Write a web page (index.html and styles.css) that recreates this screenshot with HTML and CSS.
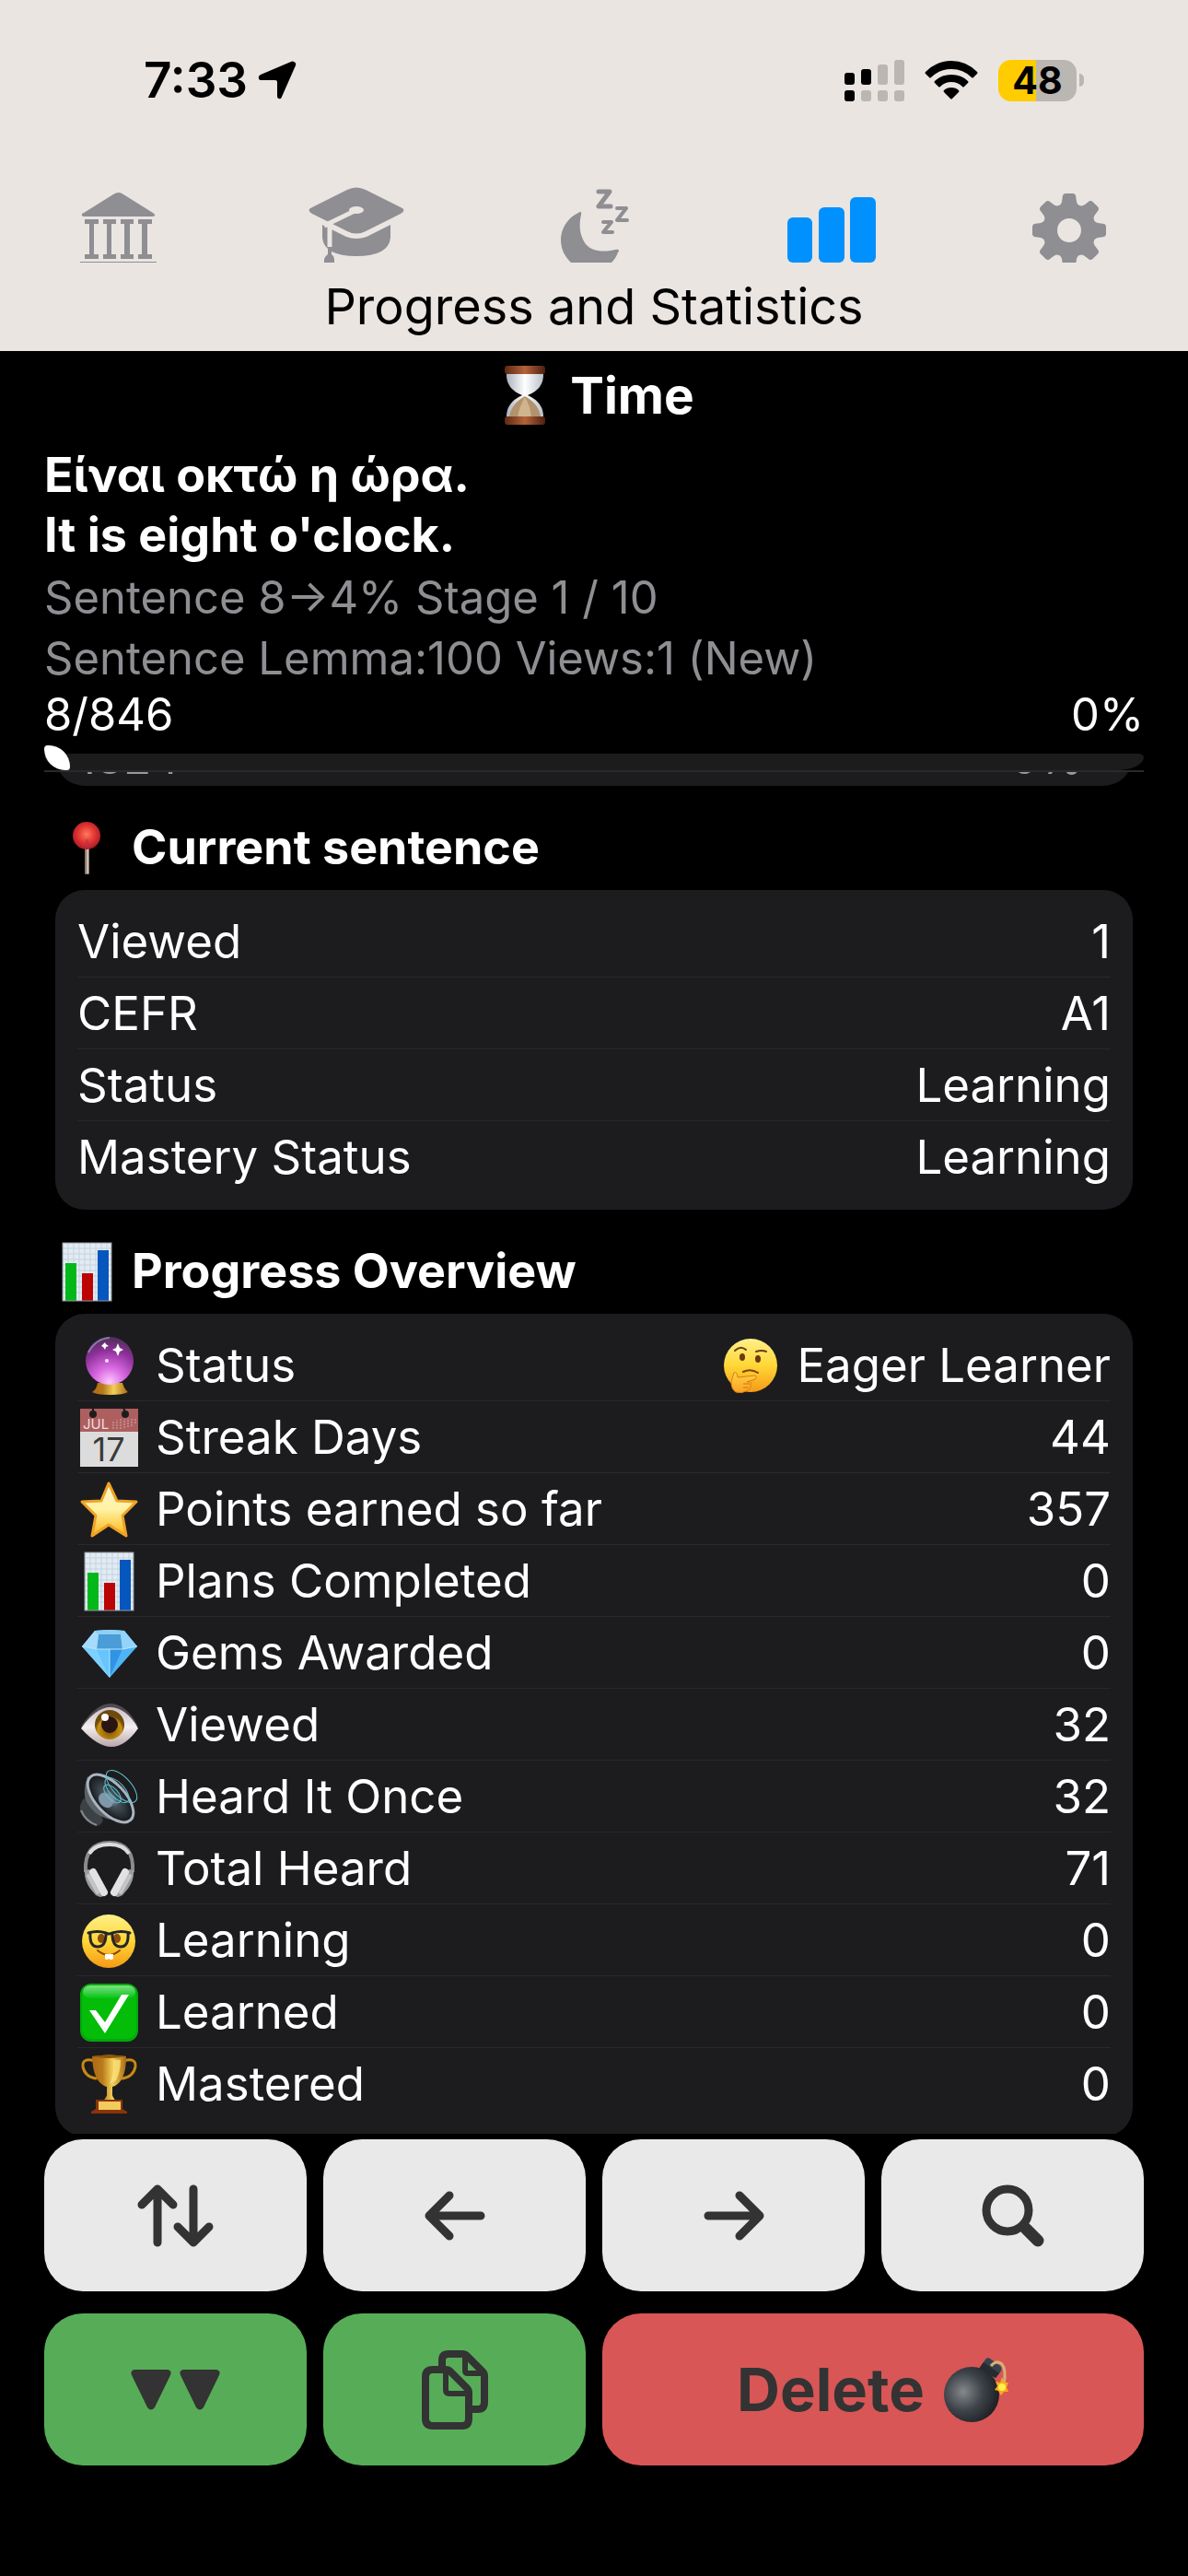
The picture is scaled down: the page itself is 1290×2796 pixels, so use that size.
FILE: index.html
```html
<!DOCTYPE html>
<html lang="en">

<head>
    <meta charset="UTF-8">
    <meta name="viewport" content="width=device-width, initial-scale=1.0">
    <title>Progress and Statistics</title>
    <link rel="stylesheet" href="styles.css">
</head>

<body>
    <header class="top">
        <div class="status-bar">
            <div class="status-left">
                <span class="clock">7:33</span>
                <svg class="location" viewBox="0 0 42 42" width="42" height="42">
                    <path d="M39 1Q42 2 41 5L26 39Q25 42 23 41Q21 41 21 38V23Q21 21 19 21H4Q1 21 1 19Q0 17 3 15L36 1Q38 0 39 1Z" fill="#000" />
                </svg>
            </div>
            <div class="status-right">
                <svg viewBox="0 0 65 45" width="65" height="45">
                    <g fill="#bab6b1">
                        <rect x="36" y="5" width="11" height="22" rx="3" />
                        <rect x="54" y="0" width="11" height="27" rx="3" />
                        <rect x="18" y="33" width="11" height="12" rx="3" />
                        <rect x="36" y="33" width="11" height="12" rx="3" />
                        <rect x="54" y="33" width="11" height="12" rx="3" />
                    </g>
                    <rect x="0" y="14" width="11" height="13" rx="3" />
                    <rect x="18" y="10" width="11" height="17" rx="3" />
                    <rect x="0" y="33" width="11" height="12" rx="3" />
                </svg>
                <svg viewBox="0 0 58 42" width="58" height="42">
                    <path d="M1 12Q13 0 29 0Q45 0 57 12Q58 13 57 14L53 18Q52 19 51 18Q42 9 29 9Q16 9 7 18Q6 19 5 18L1 14Q0 13 1 12Z" />
                    <path d="M11 22Q18 15 29 15Q40 15 47 22Q48 23 47 24L43 28Q42 29 41 28Q36 23 29 23Q22 23 17 28Q16 29 15 28L11 24Q10 23 11 22Z" />
                    <path d="M21 32Q24 29 29 29Q34 29 37 32Q38 33 37 34L30 41Q29 42 28 41L21 34Q20 33 21 32Z" />
                </svg>
                <span class="battery"><span class="battery-level">48</span></span>
            </div>
        </div>

        <nav class="tabs">
            <a href="#home" aria-label="Home">
                <svg viewBox="0 0 110 85" width="110" height="85">
                    <path d="M49 11Q55 7 60 11L92 31Q95 33 94 34Q94 35 91 35H18Q15 35 15 34Q14 32 17 31Z" />
                    <path d="M18 38H33V43H28V76H33V81H18V76H23V43H18Z" />
                    <path d="M38 38H52V43H47V76H52V81H38V76H42V43H38Z" />
                    <path d="M57 38H71V43H67V76H71V81H57V76H61V43H57Z" />
                    <path d="M76 38H91V43H86V76H91V81H76V76H80V43H76Z" />
                    <rect x="13" y="84" width="83" height="1" />
                </svg>
            </a>
            <a href="#learn" aria-label="Learn">
                <svg viewBox="0 0 110 85" width="110" height="85">
                    <path d="M45 6Q55 1 65 6L103 25Q110 28 103 32L65 51Q55 56 45 51L7 32Q0 28 7 25Z" />
                    <path d="M18 44L44 57Q55 61 66 57L92 44V58Q90 78 55 78Q20 78 18 58Z" />
                    <path class="cut" d="M55 28L20 45" />
                    <ellipse class="hole" cx="55" cy="28" rx="8" ry="4" />
                    <path class="cut" d="M26 44V68" />
                    <path d="M24 68L28 71V76Q31 78 31 81V85H20V81Q21 78 24 76Z" />
                </svg>
            </a>
            <a href="#sleep" aria-label="Sleep">
                <svg viewBox="0 0 110 85" width="110" height="85">
                    <path d="M38 31Q42 28 41 33C38 45 40 57 46 65C53 73 64 74 78 71Q84 70 81 74C79 79 77 82 74 85H30C22 77 19 69 19 60C19 48 27 36 38 31Z" />
                    <g class="zigzag">
                        <path stroke-width="5" d="M60 8H72L60 24H73" />
                        <path stroke-width="4" d="M80 26H90L80 39H91" />
                        <path stroke-width="4" d="M65 41H74L65 52H75" />
                    </g>
                </svg>
            </a>
            <a href="#progress" aria-label="Progress" class="active">
                <svg viewBox="0 0 110 85" width="110" height="85">
                    <rect x="7" y="36" width="27" height="49" rx="6" />
                    <rect x="41" y="25" width="28" height="60" rx="6" />
                    <rect x="75" y="14" width="28" height="71" rx="6" />
                </svg>
            </a>
            <a href="#settings" aria-label="Settings">
                <svg viewBox="0 0 110 85" width="110" height="85">
                    <g transform="translate(55 50)">
                        <circle r="29" />
                        <path id="tooth" d="M-13 -26Q-9 -27 -8 -31L-7 -38Q-6 -40 -4 -40H4Q6 -40 7 -38L8 -31Q9 -27 13 -26Z" />
                        <use href="#tooth" transform="rotate(45)" />
                        <use href="#tooth" transform="rotate(90)" />
                        <use href="#tooth" transform="rotate(135)" />
                        <use href="#tooth" transform="rotate(180)" />
                        <use href="#tooth" transform="rotate(225)" />
                        <use href="#tooth" transform="rotate(270)" />
                        <use href="#tooth" transform="rotate(315)" />
                        <circle class="hole" r="13" />
                    </g>
                </svg>
            </a>
        </nav>
        <p class="page-title">Progress and Statistics</p>
    </header>

    <section class="sentence">
        <h1>
            <svg class="emoji" viewBox="0 0 68 68">
                <defs>
                    <linearGradient id="wood">
                        <stop offset="0" stop-color="#5b2a14" />
                        <stop offset=".5" stop-color="#b5623a" />
                        <stop offset="1" stop-color="#4b2010" />
                    </linearGradient>
                    <linearGradient id="glass">
                        <stop offset="0" stop-color="#aab2bd" />
                        <stop offset=".5" stop-color="#fff" />
                        <stop offset="1" stop-color="#b9c0c9" />
                    </linearGradient>
                </defs>
                <path d="M14 10H54Q55 27 37 34Q55 42 54 59H14Q13 42 31 34Q13 27 14 10Z" fill="url(#glass)" />
                <path d="M34 35Q50 44 51 58H17Q18 44 34 35Z" fill="#b2936f" />
                <path d="M34 36Q40 46 41 58H26Q28 46 34 36Z" fill="#d0b48e" />
                <rect x="12" y="2" width="44" height="9" rx="3" fill="url(#wood)" />
                <rect x="12" y="57" width="44" height="9" rx="3" fill="url(#wood)" />
            </svg>
            Time
        </h1>
        <div class="phrase">
            <p lang="el">Είναι οκτώ η ώρα.</p>
            <p>It is eight o'clock.</p>
        </div>
        <div class="details">
            <p>Sentence 8→4% Stage 1 / 10</p>
            <p>Sentence Lemma:100 Views:1 (New)</p>
        </div>
        <div class="counter">
            <label for="position">8/846</label>
            <span>0%</span>
        </div>
        <input class="slider" id="position" type="range" min="0" max="846" value="0">
    </section>

    <main class="stats">
        <div class="scrolled">
            <div class="scrolled-card">
                <span>1824</span>
                <span>0%</span>
            </div>
        </div>

        <h2>
            <svg class="emoji" viewBox="0 0 68 68">
                <defs>
                    <radialGradient id="pin" cx=".5" cy=".45">
                        <stop offset="0" stop-color="#ff7a5e" />
                        <stop offset=".55" stop-color="#e63b35" />
                        <stop offset="1" stop-color="#b81f2a" />
                    </radialGradient>
                </defs>
                <rect x="32" y="33" width="5" height="30" rx="1" fill="#8b7a6e" />
                <rect x="34" y="33" width="2" height="29" fill="#c9bbb0" />
                <circle cx="34" cy="21" r="15" fill="url(#pin)" />
                <path d="M32 34L33 25H36L37 34Z" fill="#b9304a" opacity=".6" />
            </svg>
            Current sentence
        </h2>
        <div class="card">
            <table>
                <tr>
                    <th scope="row">Viewed</th>
                    <td>1</td>
                </tr>
                <tr>
                    <th scope="row">CEFR</th>
                    <td>A1</td>
                </tr>
                <tr>
                    <th scope="row">Status</th>
                    <td>Learning</td>
                </tr>
                <tr>
                    <th scope="row">Mastery Status</th>
                    <td>Learning</td>
                </tr>
            </table>
        </div>

        <h2>
            <svg class="emoji" viewBox="0 0 68 68">
                <rect x="8" y="3" width="53" height="63" fill="#e3ebf2" />
                <path d="M8 9H61M8 15H61M8 21H61M8 27H61M8 33H61M8 39H61M8 45H61M8 51H61M8 57H61M14 3V66M20 3V66M26 3V66M32 3V66M38 3V66M44 3V66M50 3V66M56 3V66" stroke="#c3d3e2" />
                <rect x="11" y="25" width="12" height="41" fill="#05b81a" />
                <rect x="29" y="36" width="12" height="30" fill="#bb0404" />
                <rect x="46" y="11" width="12" height="55" fill="#0657bd" />
                <rect x="8" y="3" width="53" height="63" fill="none" stroke="#8f979f" />
            </svg>
            Progress Overview
        </h2>
        <div class="card">
            <table>
                <tr>
                    <th scope="row">
                        <div class="cell">
                            <svg class="emoji" viewBox="0 0 68 68">
                                <defs>
                                    <radialGradient id="orb" cx=".5" cy=".95" r=".9">
                                        <stop offset="0" stop-color="#ffc8ff" />
                                        <stop offset=".35" stop-color="#d968e2" />
                                        <stop offset=".75" stop-color="#8c3098" />
                                        <stop offset="1" stop-color="#57305f" />
                                    </radialGradient>
                                    <linearGradient id="gold">
                                        <stop offset="0" stop-color="#b06a12" />
                                        <stop offset=".3" stop-color="#b87a1b" />
                                        <stop offset=".6" stop-color="#f3cf5a" />
                                        <stop offset="1" stop-color="#a8690f" />
                                    </linearGradient>
                                </defs>
                                <path d="M22 53H49Q51 60 55 63Q50 66 35 66Q21 66 16 63Q21 60 22 53Z" fill="url(#gold)" />
                                <circle cx="35" cy="29" r="26" fill="url(#orb)" />
                                <path d="M12 20Q20 5 35 4" fill="none" stroke="#a9a4d8" stroke-width="2" opacity=".6" />
                                <path d="M44 10L46 15L50 17L46 19L44 24L42 19L38 17L42 15Z" fill="#fff" />
                                <path d="M30 9L31 11L34 13L31 14L30 17L28 14L26 13L28 11Z" fill="#fff" />
                                <circle cx="32" cy="29" r="2" fill="#fbe0ff" />
                            </svg>
                            Status
                        </div>
                    </th>
                    <td>
                        <div class="cell cell-end">
                            <svg class="emoji" viewBox="0 0 68 68">
                                <defs>
                                    <linearGradient id="face" x2="0" y2="1">
                                        <stop offset="0" stop-color="#fff08a" />
                                        <stop offset=".5" stop-color="#ffd736" />
                                        <stop offset="1" stop-color="#f59a16" />
                                    </linearGradient>
                                    <linearGradient id="hand" x2="0" y2="1">
                                        <stop offset="0" stop-color="#ffd447" />
                                        <stop offset="1" stop-color="#fba022" />
                                    </linearGradient>
                                </defs>
                                <circle cx="35" cy="34" r="29" fill="url(#face)" />
                                <path d="M18 18Q24 12 30 17M41 19Q47 17 52 19" fill="none" stroke="#6b3f10" stroke-width="2" stroke-linecap="round" />
                                <ellipse cx="26" cy="25" rx="3" ry="4" fill="#6b3a10" />
                                <ellipse cx="43" cy="27" rx="3" ry="4" fill="#6b3a10" />
                                <path d="M27 41Q35 37 43 42" fill="none" stroke="#7a4510" stroke-width="2" stroke-linecap="round" />
                                <path d="M17 42Q20 40 21 47L40 45Q43 46 40 49L31 52Q37 51 35 55Q36 59 32 61Q26 65 19 63Q14 60 14 52Z" fill="url(#hand)" stroke="#d9800f" />
                                <path d="M27 54H34M27 58H33" stroke="#c8740c" />
                            </svg>
                            Eager Learner
                        </div>
                    </td>
                </tr>
                <tr>
                    <th scope="row">
                        <div class="cell">
                            <svg class="emoji" viewBox="0 0 68 68">
                                <rect x="3" y="3" width="63" height="63" fill="#dcdcdc" />
                                <rect x="3" y="3" width="63" height="25" fill="#ad5f5f" />
                                <path d="M17 2V9M50 2L53 9" stroke="#1c1c1e" stroke-width="2" />
                                <circle cx="17" cy="9" r="4" fill="#1c1c1e" />
                                <circle cx="52" cy="9" r="4" fill="#1c1c1e" />
                                <path d="M39 25V16M43 25V15M47 25V14M51 24V14M55 23V13M59 22V13M63 19V13" stroke="#d8a9a9" stroke-dasharray="2 1" />
                                <text class="cal-month" x="6" y="25">JUL</text>
                                <text class="cal-day" x="34" y="60" text-anchor="middle">17</text>
                            </svg>
                            Streak Days
                        </div>
                    </th>
                    <td>44</td>
                </tr>
                <tr>
                    <th scope="row">
                        <div class="cell">
                            <svg class="emoji" viewBox="0 0 68 68">
                                <defs>
                                    <linearGradient id="star" x2="0" y2="1">
                                        <stop offset="0" stop-color="#fff6cf" />
                                        <stop offset=".5" stop-color="#fff2a2" />
                                        <stop offset="1" stop-color="#fbb718" />
                                    </linearGradient>
                                </defs>
                                <path d="M34 6L43 25L64 26L49 41L53 63L34 51L16 63L20 41L5 26L26 25Z" fill="url(#star)" stroke="#efa326" stroke-width="3" stroke-linejoin="round" />
                            </svg>
                            Points earned so far
                        </div>
                    </th>
                    <td>357</td>
                </tr>
                <tr>
                    <th scope="row">
                        <div class="cell">
                            <svg class="emoji" viewBox="0 0 68 68">
                                <rect x="8" y="3" width="53" height="63" fill="#e3ebf2" />
                                <path d="M8 9H61M8 15H61M8 21H61M8 27H61M8 33H61M8 39H61M8 45H61M8 51H61M8 57H61M14 3V66M20 3V66M26 3V66M32 3V66M38 3V66M44 3V66M50 3V66M56 3V66" stroke="#c3d3e2" />
                                <rect x="11" y="25" width="12" height="41" fill="#05b81a" />
                                <rect x="29" y="36" width="12" height="30" fill="#bb0404" />
                                <rect x="46" y="11" width="12" height="55" fill="#0657bd" />
                                <rect x="8" y="3" width="53" height="63" fill="none" stroke="#8f979f" />
                            </svg>
                            Plans Completed
                        </div>
                    </th>
                    <td>0</td>
                </tr>
                <tr>
                    <th scope="row">
                        <div class="cell">
                            <svg class="emoji" viewBox="0 0 68 68">
                                <path d="M19 10L35 9L51 10L65 27L35 61L5 27Z" fill="#4fb4f5" />
                                <path d="M19 10L35 9L51 10L59 26L48 30H22L10 26Z" fill="#7fcbf8" />
                                <path d="M23 14H47L49 30H21Z" fill="#4a9dd6" />
                                <path d="M19 10L23 14L21 30L5 27Z" fill="#a5dcfb" />
                                <path d="M51 10L47 14L49 30L65 27Z" fill="#93d4fa" />
                                <path d="M19 10L35 9L51 10L47 14H23Z" fill="#8fd0f5" />
                                <path d="M21 30H49L35 61Z" fill="#66c5fb" />
                                <path d="M35 30H49L35 61Z" fill="#2f93e6" />
                                <path d="M5 27L21 30L35 61Z" fill="#7dd0fd" />
                                <path d="M5 27L21 30H49L65 27M35 30V60" fill="none" stroke="#b8e7ff" />
                            </svg>
                            Gems Awarded
                        </div>
                    </th>
                    <td>0</td>
                </tr>
                <tr>
                    <th scope="row">
                        <div class="cell">
                            <svg class="emoji" viewBox="0 0 68 68">
                                <defs>
                                    <radialGradient id="iris" cx=".5" cy=".7">
                                        <stop offset="0" stop-color="#7d4d0b" />
                                        <stop offset=".8" stop-color="#c9940f" />
                                        <stop offset="1" stop-color="#6e4a10" />
                                    </radialGradient>
                                    <linearGradient id="white" x2="0" y2="1">
                                        <stop offset="0" stop-color="#c9bfc4" />
                                        <stop offset=".5" stop-color="#f3eef0" />
                                        <stop offset="1" stop-color="#b9a6a8" />
                                    </linearGradient>
                                </defs>
                                <path d="M4 36Q20 11 36 11Q54 12 66 36L58 34Q36 8 12 32Z" fill="#504a4e" />
                                <path d="M4 38Q20 15 36 15Q54 16 66 38Q52 58 37 58Q22 58 4 38Z" fill="url(#white)" />
                                <circle cx="35" cy="34" r="16" fill="url(#iris)" />
                                <circle cx="35" cy="34" r="9" fill="#2a1512" />
                                <circle cx="30" cy="26" r="4" fill="#fff" />
                            </svg>
                            Viewed
                        </div>
                    </th>
                    <td>32</td>
                </tr>
                <tr>
                    <th scope="row">
                        <div class="cell">
                            <svg class="emoji" viewBox="0 0 68 68">
                                <defs>
                                    <radialGradient id="cone">
                                        <stop offset="0" stop-color="#9fb4c4" />
                                        <stop offset=".35" stop-color="#46525b" />
                                        <stop offset="1" stop-color="#121518" />
                                    </radialGradient>
                                </defs>
                                <path d="M7 36Q2 42 3 50Q8 62 20 66Q25 66 28 60L20 40Z" fill="#3c4145" />
                                <path d="M4 49Q9 61 21 65" fill="none" stroke="#83898e" stroke-width="2" />
                                <path d="M11 12Q5 30 10 40Q18 54 32 58Q46 62 58 60Z" fill="#5b6268" />
                                <ellipse cx="36" cy="36" rx="32" ry="16" transform="rotate(47 36 36)" fill="url(#cone)" stroke="#aab3bf" stroke-width="3" />
                                <ellipse cx="31" cy="38" rx="9" ry="7" transform="rotate(47 31 38)" fill="#8196a6" />
                                <g fill="none" stroke="#5cc4d2" stroke-width="1">
                                    <ellipse cx="38" cy="31" rx="12" ry="6" transform="rotate(47 38 31)" />
                                    <ellipse cx="43" cy="27" rx="17" ry="8" transform="rotate(47 43 27)" />
                                    <ellipse cx="48" cy="23" rx="22" ry="10" transform="rotate(47 48 23)" />
                                </g>
                            </svg>
                            Heard It Once
                        </div>
                    </th>
                    <td>32</td>
                </tr>
                <tr>
                    <th scope="row">
                        <div class="cell">
                            <svg class="emoji" viewBox="0 0 68 68">
                                <path d="M9 38Q7 6 35 6Q62 6 60 38" fill="none" stroke="#8b8b8d" stroke-width="4" />
                                <path d="M13 18Q19 8 35 8Q50 8 56 18" fill="none" stroke="#dcdcdc" stroke-width="4" />
                                <path d="M8 36Q7 46 14 56L20 63Q27 67 28 63L13 35Z" fill="#9a9da0" />
                                <path d="M61 36Q62 46 55 56L49 63Q42 67 41 63L56 35Z" fill="#9a9da0" />
                                <path d="M17 38L29 60M52 38L40 60" stroke="#e2e2e2" stroke-width="8" stroke-linecap="round" />
                                <path d="M12 42L22 60M57 42L47 60" stroke="#c3c5c7" stroke-width="4" stroke-linecap="round" />
                            </svg>
                            Total Heard
                        </div>
                    </th>
                    <td>71</td>
                </tr>
                <tr>
                    <th scope="row">
                        <div class="cell">
                            <svg class="emoji" viewBox="0 0 68 68">
                                <circle cx="34" cy="35" r="29" fill="url(#face)" />
                                <ellipse cx="26" cy="32" rx="4" ry="5" fill="#8a4b0c" />
                                <ellipse cx="43" cy="32" rx="4" ry="5" fill="#8a4b0c" />
                                <path d="M12 26Q22 23 31 26Q34 28 38 26Q48 23 57 26M14 26Q13 41 22 41Q31 41 31 27M38 27Q38 41 47 41Q56 41 55 26" fill="none" stroke="#23262a" stroke-width="3" stroke-linecap="round" />
                                <path d="M22 45Q34 55 46 45" fill="none" stroke="#8a4508" stroke-width="2" stroke-linecap="round" />
                                <path d="M30 49H39V54Q37 56 34 54Q32 56 30 54Z" fill="#fff" />
                            </svg>
                            Learning
                        </div>
                    </th>
                    <td>0</td>
                </tr>
                <tr>
                    <th scope="row">
                        <div class="cell">
                            <svg class="emoji" viewBox="0 0 68 68">
                                <defs>
                                    <linearGradient id="gloss" x2="0" y2="1">
                                        <stop offset="0" stop-color="#7fe184" />
                                        <stop offset="1" stop-color="#05c414" />
                                    </linearGradient>
                                </defs>
                                <rect x="3" y="3" width="63" height="63" rx="12" fill="#04a80d" />
                                <rect x="5" y="5" width="59" height="58" rx="10" fill="#03bd09" />
                                <rect x="6" y="5" width="57" height="14" rx="8" fill="url(#gloss)" />
                                <path d="M13 32H20L30 45L48 15H56L30 57Z" fill="#fff" />
                            </svg>
                            Learned
                        </div>
                    </th>
                    <td>0</td>
                </tr>
                <tr>
                    <th scope="row">
                        <div class="cell">
                            <svg class="emoji" viewBox="0 0 68 68">
                                <path d="M19 9Q5 5 6 15Q8 26 20 28M50 9Q64 5 63 15Q61 26 49 28" fill="none" stroke="#c98a12" stroke-width="3" stroke-linecap="round" />
                                <path d="M16 4Q34 1 53 4Q53 33 38 37V43Q37 48 43 53H27Q33 48 32 43V37Q17 33 16 4Z" fill="url(#gold)" />
                                <path d="M16 4Q34 1 53 4Q34 8 16 4Z" fill="#8f5608" />
                                <path d="M39 8Q40 24 35 34L42 30Q47 20 47 8Z" fill="#fbe27c" opacity=".8" />
                                <path d="M20 51H49V61L54 64V66H15V64L20 61Z" fill="#8a3409" />
                                <rect x="23" y="53" width="24" height="9" fill="#f2cb5c" />
                            </svg>
                            Mastered
                        </div>
                    </th>
                    <td>0</td>
                </tr>
            </table>
        </div>
    </main>

    <footer class="controls">
        <button type="button" aria-label="Sort">
            <svg viewBox="0 0 84 68" width="84" height="68">
                <path class="stroke" d="M22 5V63M5 22L22 5L39 22M61 5V63M44 46L61 63L78 46" />
            </svg>
        </button>
        <button type="button" aria-label="Previous">
            <svg viewBox="0 0 66 54" width="66" height="54">
                <path class="stroke" d="M5 27H61M27 5L5 27L27 49" />
            </svg>
        </button>
        <button type="button" aria-label="Next">
            <svg viewBox="0 0 66 54" width="66" height="54">
                <path class="stroke" d="M5 27H61M39 5L61 27L39 49" />
            </svg>
        </button>
        <button type="button" aria-label="Search">
            <svg viewBox="0 0 68 68" width="68" height="68">
                <circle class="stroke" cx="28" cy="28" r="23" />
                <path class="stroke handle" d="M48 48L61 61" />
            </svg>
        </button>
        <button type="button" class="green" aria-label="Show more">
            <svg viewBox="0 0 97 46" width="97" height="46">
                <path d="M4 1H40Q45 2 43 7L26 42Q22 47 18 42L1 7Q-1 2 4 1Z" />
                <path d="M57 1H93Q98 2 96 7L79 42Q75 47 71 42L54 7Q52 2 57 1Z" />
            </svg>
        </button>
        <button type="button" class="green" aria-label="Copy">
            <svg viewBox="0 0 72 88" width="72" height="88">
                <path class="page" d="M22 20V12Q22 5 29 5H44Q47 5 49 7L66 24Q68 26 68 29V57Q68 65 61 65H55" />
                <path class="page fold" d="M47 7V23Q47 26 50 26H66" />
                <path class="page" d="M12 22H26Q29 22 31 24L49 42Q51 44 51 47V75Q51 83 44 83H12Q4 83 4 75V30Q4 22 12 22Z" />
                <path class="page fold" d="M26 24V44Q26 48 30 48H49" />
            </svg>
        </button>
        <button type="button" class="delete">
            Delete
            <svg viewBox="0 0 72 72" width="72" height="72">
                <defs>
                    <radialGradient id="bomb" cx=".35" cy=".45" r=".7">
                        <stop offset="0" stop-color="#85888b" />
                        <stop offset=".5" stop-color="#3d4349" />
                        <stop offset="1" stop-color="#191a1c" />
                    </radialGradient>
                </defs>
                <circle cx="31" cy="41" r="30" fill="url(#bomb)" />
                <path d="M46 3Q48 0 51 2L62 10Q65 13 62 17L57 23L39 13Z" fill="#34424f" />
                <path d="M39 13L57 23L61 18L44 6Z" fill="#262b30" />
                <path d="M52 10Q58 3 64 8Q69 14 66 30" fill="none" stroke="#d3b277" stroke-width="3" />
                <path d="M64 22L66 28L71 28L69 33L71 38L66 38L63 42L60 37L56 36L59 32L57 27L62 28Z" fill="#fba81c" />
                <circle cx="64" cy="33" r="4" fill="#fff04a" />
            </svg>
        </button>
    </footer>
</body>

</html>
```
FILE: styles.css
```css
/* Reset styles */
* {
    margin: 0;
    padding: 0;
    box-sizing: border-box;
}

/* Global styles */
body {
    display: flex;
    flex-direction: column;
    height: 100vh;
    background-color: #000;
    color: #fff;
    font-family: Inter, "Liberation Sans", sans-serif;
    font-size: 51px;
}

svg {
    display: block;
    flex-shrink: 0;
}

/* Header */
.top {
    background-color: #eae5e1;
    color: #000;
}

.status-bar {
    display: flex;
    justify-content: space-between;
    align-items: center;
    height: 172px;
    padding: 2px 113px 0 156px;
}

.status-left,
.status-right {
    display: flex;
    align-items: center;
}

.status-left {
    gap: 11px;
}

.status-right {
    gap: 22px;
}

.clock {
    font-size: 53px;
    font-weight: 600;
}

.battery {
    display: flex;
    align-items: center;
    gap: 3px;
}

.battery-level {
    width: 85px;
    border-radius: 14px;
    background: linear-gradient(to right, #ffcc00 48%, #bab6b1 48%);
    font-size: 41px;
    font-weight: 700;
    line-height: 45px;
    text-align: center;
}

.battery::after {
    content: "";
    width: 5px;
    height: 14px;
    border-radius: 0 5px 5px 0;
    background-color: #bab6b1;
}

.tabs {
    display: grid;
    grid-template-columns: repeat(5, 1fr);
    justify-items: center;
    padding-top: 28px;
    fill: #8e8e93;
}

.tabs .active {
    fill: #0091ff;
}

.tabs .hole {
    fill: #eae5e1;
}

.tabs .cut {
    fill: none;
    stroke: #eae5e1;
    stroke-width: 5px;
}

.zigzag {
    fill: none;
    stroke: #8e8e93;
    stroke-linejoin: round;
    stroke-linecap: round;
}

.page-title {
    padding: 15px 0;
    font-size: 54px;
    line-height: 66px;
    text-align: center;
}

/* Current sentence */
.sentence {
    padding: 14px 48px 0;
}

.emoji {
    width: 68px;
    height: 68px;
}

h1,
h2 {
    display: flex;
    align-items: center;
    gap: 15px;
    font-weight: 700;
    line-height: 68px;
}

h1 {
    justify-content: center;
    font-size: 55px;
}

h2 {
    margin: 33px 0 12px;
    font-size: 52px;
}

.phrase {
    margin-top: 20px;
    font-size: 52px;
    font-weight: 700;
    line-height: 65px;
}

.details {
    margin-top: 3px;
    color: #8e8e93;
    font-size: 49px;
    line-height: 66px;
}

.counter {
    display: flex;
    justify-content: space-between;
    font-size: 49px;
    line-height: 56px;
}

.slider {
    display: block;
    width: 100%;
    height: 27px;
    margin-top: 5px;
    padding-top: 9px;
    background: none;
    appearance: none;
}

.slider::-webkit-slider-runnable-track {
    height: 18px;
    background-color: #1c1c1c;
    border-radius: 0 6px 30px 28px / 0 4px 14px 18px;
}

.slider::-webkit-slider-thumb {
    width: 28px;
    height: 27px;
    margin-top: -9px;
    border-radius: 4px 24px 4px 24px;
    background-color: #fff;
    appearance: none;
}

/* Stats */
.stats {
    flex: 1;
    min-height: 0;
    margin: 0 48px;
    padding: 0 12px;
    border-top: 2px solid #2a2a2c;
    overflow: hidden;
}

.scrolled {
    display: flex;
    align-items: flex-end;
    height: 15px;
    overflow: hidden;
}

.scrolled-card {
    display: flex;
    justify-content: space-between;
    width: 100%;
    padding: 18px 54px 0 24px;
    border-radius: 32px;
    background-color: #1c1c1e;
    color: #98989f;
    font-size: 49px;
    line-height: 60px;
}

.card {
    padding: 17px 24px 18px;
    border-radius: 32px;
    background-color: #1c1c1e;
}

table {
    width: 100%;
    border-spacing: 0;
}

th,
td {
    height: 78px;
    border-bottom: 1px solid #29292b;
    font-weight: 400;
    line-height: 68px;
    text-align: left;
}

td {
    text-align: right;
}

tr:last-child th,
tr:last-child td {
    border-bottom: none;
}

.cell {
    display: flex;
    align-items: center;
    gap: 17px;
}

.cell-end {
    justify-content: flex-end;
}

.cal-month {
    font-size: 15px;
    fill: #f1dede;
}

.cal-day {
    font-size: 36px;
    fill: #3a3a3a;
}

/* Buttons */
.controls {
    display: grid;
    grid-template-columns: repeat(4, 1fr);
    gap: 24px 18px;
    padding: 6px 48px 120px;
}

.controls button {
    display: flex;
    justify-content: center;
    align-items: center;
    gap: 20px;
    height: 165px;
    border: none;
    border-radius: 42px;
    background-color: #e9e9e9;
    color: #333;
    fill: #333;
    font-family: inherit;
    font-size: 65px;
    font-weight: 700;
    cursor: pointer;
}

.controls .green {
    background-color: #57ad57;
}

.controls .delete {
    grid-column: span 2;
    background-color: #d85656;
}

.stroke,
.page {
    fill: none;
    stroke: #333;
    stroke-width: 9px;
    stroke-linecap: round;
    stroke-linejoin: round;
}

.handle {
    stroke-width: 13px;
}

.page {
    stroke-width: 8px;
    stroke-linecap: butt;
}

.fold {
    stroke-width: 6px;
}
```
